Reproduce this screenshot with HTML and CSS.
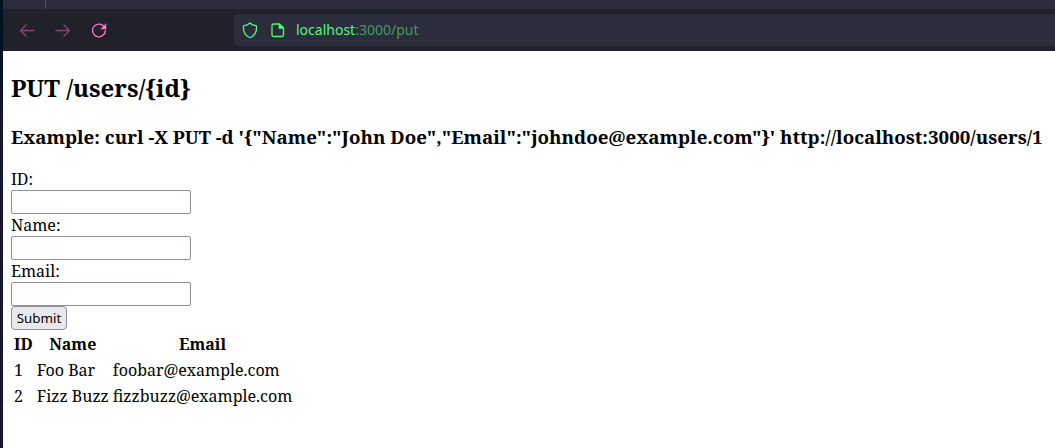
FILE: index.html
```
<!DOCTYPE html>
<html lang="en">
<head>
<meta charset="utf-8">
<title>PUT /users/{id}</title>
<link rel="stylesheet" href="styles.css">
</head>
<body>
<div class="desktop">
  <div class="window">
    <div class="tabstrip"><span class="tab-edge"></span></div>
    <div class="toolbar">
      <div class="nav">
        <svg class="icon dim" viewBox="0 0 16 16"><path d="M15 8.5H1.5M7 3L1.5 8.5L7 14"/></svg>
        <svg class="icon dim" viewBox="0 0 16 16"><path d="M1 8.5H14.5M9 3L14.5 8.5L9 14"/></svg>
        <svg class="icon" viewBox="0 0 16 16"><path d="M12.8 4.2A6.4 6.4 0 1 0 14.4 8.5"/><path class="solid" d="M15 2V7H10Z"/></svg>
      </div>
      <div class="urlbar">
        <svg class="icon green" viewBox="0 0 16 16"><path d="M8 1C9.8 2.7 12 3.5 14.5 3.8C15 9.5 12.6 13.7 8 15.8C3.4 13.7 1 9.5 1.5 3.8C4 3.5 6.2 2.7 8 1Z"/></svg>
        <svg class="icon green" viewBox="0 0 16 16"><path d="M3.5 2H9.5L13.5 6V13A1.5 1.5 0 0 1 12 14.5H3.5A1.5 1.5 0 0 1 2 13V3.5A1.5 1.5 0 0 1 3.5 2Z"/><path class="solid" d="M9 1.8L13.8 6.6H9Z"/></svg>
        <span class="url"><span class="host">localhost</span>:3000/put</span>
      </div>
    </div>
    <main class="page">
      <h2 class="title">PUT /users/{id}</h2>
      <h3 class="example">Example: curl -X PUT -d '{"Name":"John Doe","Email":"johndoe@example.com"}' http://localhost:3000/users/1</h3>
      <form class="form">
        <label class="label" for="id">ID:</label>
        <input class="input" type="text" id="id">
        <label class="label" for="name">Name:</label>
        <input class="input" type="text" id="name">
        <label class="label" for="email">Email:</label>
        <input class="input" type="text" id="email">
        <button class="submit" type="button">Submit</button>
      </form>
      <table class="users">
        <tr><th>ID</th><th>Name</th><th>Email</th></tr>
        <tr><td>1</td><td>Foo Bar</td><td>foobar@example.com</td></tr>
        <tr><td>2</td><td>Fizz Buzz</td><td>fizzbuzz@example.com</td></tr>
      </table>
    </main>
  </div>
</div>
</body>
</html>
```
FILE: styles.css
```
* { box-sizing: border-box; }
body { margin: 0; overflow: hidden; }
.desktop {
  height: 448px;
  padding-left: 3px;
  background: linear-gradient(#001021 0, #02142a 80px, #171a2f 120px, #171a2f 100%);
}
.window { height: 448px; display: flex; flex-direction: column; background: #fff; }
.tabstrip { height: 9px; flex: none; background: #2b2d3c; }
.tab-edge { display: block; width: 1px; height: 9px; margin-left: 42px; background: #4d4f68; }
.toolbar { height: 42px; flex: none; display: flex; align-items: center; background: #21212c; }
.nav { width: 231px; display: flex; gap: 20px; padding-left: 16px; }
.icon {
  width: 16px;
  height: 16px;
  flex: none;
  fill: none;
  stroke: #ff79c6;
  stroke-width: 1.3;
  stroke-linecap: round;
  stroke-linejoin: round;
}
.dim { opacity: .45; }
.green { stroke: #50fa7b; }
.solid { fill: #ff79c6; stroke-width: .5; }
.green .solid { fill: #50fa7b; }
.urlbar {
  flex: 1;
  height: 32px;
  display: flex;
  align-items: center;
  gap: 12px;
  padding-left: 8px;
  border-radius: 4px 0 0 4px;
  background: #2b2d3c;
}
.url { margin-left: -2px; font: 14px/20px "Noto Sans", sans-serif; color: #419a5e; }
.host { color: #50fa7b; }
.page { flex: 1; padding: 20px 8px 0; font: 16px/22px "Noto Serif", serif; color: #000; }
.title { margin: 0 0 20px; font-size: 24px; line-height: 33px; }
.example { margin: 0 0 18px; font-size: 18.72px; line-height: 26px; white-space: nowrap; }
.form { display: flex; flex-direction: column; align-items: flex-start; }
.label { height: 22px; }
.input { width: 180px; height: 24px; border: 1px solid #8f8f9d; border-radius: 2px; background: #fff; }
.submit {
  width: 56px;
  height: 24px;
  padding: 0;
  border: 1px solid #8f8f9d;
  border-radius: 4px;
  background: #e9e9ed;
  color: #000;
  font: 13.333px "Noto Sans", sans-serif;
}
.users { border-spacing: 2px; }
.users th, .users td { padding: 1px; }
```
